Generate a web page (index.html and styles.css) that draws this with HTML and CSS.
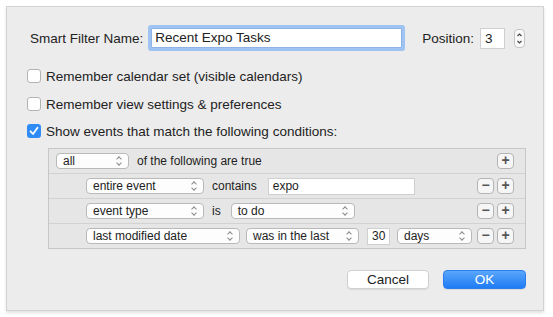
FILE: index.html
```html
<!DOCTYPE html>
<html lang="en">
<head>
  <meta charset="UTF-8" />
  <title>Smart Filter</title>
  <link rel="stylesheet" href="styles.css">
</head>
<body>
  <div class="dialog">
    <div class="name-row">
      <span class="label">Smart Filter Name:</span>
      <div class="name-field">Recent Expo Tasks</div>
      <span class="label pos-label">Position:</span>
      <div class="pos-field">3</div>
      <div class="stepper">
        <svg viewBox="0 0 11 19" width="11" height="19"><path d="M3.5 7 L5.5 5 L7.5 7 M3.5 12 L5.5 14 L7.5 12" fill="none" stroke="#444" stroke-width="1.2"/></svg>
      </div>
    </div>

    <div class="check-row first"><span class="checkbox"></span>Remember calendar set (visible calendars)</div>
    <div class="check-row second"><span class="checkbox"></span>Remember view settings &amp; preferences</div>
    <div class="check-row third">
      <span class="checkbox checked">
        <svg viewBox="0 0 14 14" width="14" height="14"><path d="M3.5 7.3 L6 10 L10.5 3.8" fill="none" stroke="#fff" stroke-width="1.8" stroke-linecap="round" stroke-linejoin="round"/></svg>
      </span>Show events that match the following conditions:
    </div>

    <div class="conditions">
      <div class="cond-row top">
        <div class="popup w-all">all<i class="chev"></i></div>
        <span class="word">of the following are true</span>
        <div class="row-buttons">
          <span class="sq-btn">+</span>
        </div>
      </div>
      <div class="cond-row">
        <div class="popup w-field">entire event<i class="chev"></i></div>
        <span class="word">contains</span>
        <div class="text-field w-expo">expo</div>
        <div class="row-buttons">
          <span class="sq-btn">&minus;</span><span class="sq-btn">+</span>
        </div>
      </div>
      <div class="cond-row">
        <div class="popup w-field">event type<i class="chev"></i></div>
        <span class="word">is</span>
        <div class="popup w-todo">to do<i class="chev"></i></div>
        <div class="row-buttons">
          <span class="sq-btn">&minus;</span><span class="sq-btn">+</span>
        </div>
      </div>
      <div class="cond-row">
        <div class="popup w-date">last modified date<i class="chev"></i></div>
        <div class="popup w-last">was in the last<i class="chev"></i></div>
        <div class="text-field w-num">30</div>
        <div class="popup w-days">days<i class="chev"></i></div>
        <div class="row-buttons">
          <span class="sq-btn">&minus;</span><span class="sq-btn">+</span>
        </div>
      </div>
    </div>

    <div class="buttons">
      <button class="btn">Cancel</button>
      <button class="btn primary">OK</button>
    </div>
  </div>
</body>
</html>
```

FILE: styles.css
```css
html, body {
  margin: 0;
  background: #fff;
  font-family: 'Liberation Sans', Arial, sans-serif;
  color: #222;
}

body {
  padding: 6px;
}

.dialog {
  width: 538px;
  height: 305px;
  box-sizing: border-box;
  background: #ececec;
  border: 1px solid #d2d2d2;
  box-shadow: 0 2px 3px rgba(0, 0, 0, 0.12);
  padding: 0 17px 21px 20px;
  display: flex;
  flex-direction: column;
}

.label {
  font-size: 13.5px;
  white-space: nowrap;
}

.name-row {
  margin-top: 18px;
  height: 26px;
  display: flex;
  align-items: center;
  padding-left: 3px;
}

.name-field {
  width: 251px;
  height: 20px;
  box-sizing: border-box;
  margin-left: 8px;
  padding-left: 3px;
  background: #fff;
  border: 1px solid #8fb3e6;
  box-shadow: 0 0 0 3px #9fc3f2;
  border-radius: 1px;
  font-size: 13.5px;
  line-height: 18px;
}

.pos-label {
  margin-left: 20px;
}

.pos-field {
  width: 25px;
  height: 21px;
  box-sizing: border-box;
  margin-left: 6px;
  padding-left: 4px;
  background: #fff;
  border: 1px solid #d0d0d0;
  font-size: 13.5px;
  line-height: 19px;
}

.stepper {
  width: 11px;
  height: 19px;
  margin-left: 9px;
  box-sizing: border-box;
  border: 1px solid #c4c4c4;
  border-radius: 4px;
  background: #fafafa;
  display: flex;
}

.stepper svg {
  margin: -1px;
}

.check-row {
  height: 20px;
  display: flex;
  align-items: center;
  font-size: 13.5px;
}

.check-row.first { margin-top: 15px; }
.check-row.second { margin-top: 8px; }
.check-row.third { margin-top: 7px; }

.checkbox {
  width: 14px;
  height: 14px;
  box-sizing: border-box;
  border: 1px solid #b4b4b4;
  border-radius: 3px;
  background: #fff;
  margin-right: 5px;
  flex: none;
}

.checkbox.checked {
  border: none;
  background: #2f8cf6;
  display: flex;
}

.conditions {
  margin: 7px 0 0 21px;
  border: 1px solid #c6c6c6;
  background: #e6e6e6;
}

.cond-row {
  height: 24px;
  display: flex;
  align-items: center;
  padding: 0 11px 0 37px;
  border-top: 1px solid #d2d2d2;
  font-size: 12px;
}

.cond-row.top {
  border-top: none;
  padding-left: 7px;
}

.popup {
  height: 16px;
  box-sizing: border-box;
  border: 1px solid #b9b9b9;
  border-radius: 4px;
  background: #fdfdfd;
  padding-left: 6px;
  line-height: 14px;
  position: relative;
  flex: none;
}

/* up/down chevrons of a popup button */
.chev {
  position: absolute;
  right: 5px;
  top: 2px;
  width: 7px;
  height: 10px;
}

.chev::before, .chev::after {
  content: '';
  position: absolute;
  left: 1px;
  width: 3px;
  height: 3px;
  border-left: 1px solid #8a8a8a;
  border-top: 1px solid #8a8a8a;
}

.chev::before {
  top: 1px;
  transform: rotate(45deg);
}

.chev::after {
  top: 5px;
  transform: rotate(-135deg);
}

.w-all { width: 73px; margin-right: 8px; }
.w-field { width: 118px; margin-right: 8px; }
.w-todo { width: 124px; margin-left: 10px; }
.w-date { width: 154px; margin-right: 6px; }
.w-last { width: 113px; margin-right: 8px; }
.w-days { width: 75px; margin-left: 7px; }

.text-field {
  height: 17px;
  box-sizing: border-box;
  background: #fff;
  border: 1px solid #d0d0d0;
  padding-left: 4px;
  line-height: 15px;
}

.w-expo { width: 147px; margin-left: 11px; }
.w-num { width: 23px; }

.row-buttons {
  margin-left: auto;
  display: flex;
  gap: 3px;
}

.sq-btn {
  width: 17px;
  height: 16px;
  box-sizing: border-box;
  border: 1px solid #b4b4b4;
  border-radius: 4px;
  background: #f6f6f6;
  color: #555;
  font-size: 14px;
  font-weight: bold;
  line-height: 13px;
  text-align: center;
}

.buttons {
  margin-top: auto;
  display: flex;
  justify-content: flex-end;
  gap: 14px;
}

.btn {
  width: 82px;
  height: 19px;
  border: 1px solid #d0d0d0;
  border-radius: 4px;
  background: #fff;
  box-shadow: 0 1px 1px rgba(0, 0, 0, 0.08);
  font-family: inherit;
  font-size: 13.5px;
  color: #222;
  padding: 0;
}

.btn.primary {
  width: 83px;
  border-color: #2a7ff0;
  background: linear-gradient(#5aa6fa, #1f7cf5);
  color: #fff;
}
```
